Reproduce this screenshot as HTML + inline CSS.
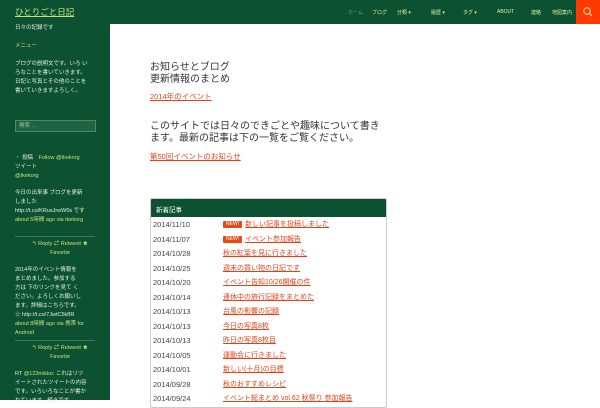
<!DOCTYPE html>
<html><head><meta charset="utf-8"><style>
*{margin:0;padding:0;box-sizing:border-box}
body{width:600px;height:400px;overflow:hidden;background:#fff;font-family:"Liberation Sans","Noto Sans CJK JP",sans-serif;position:relative}
.hdr{position:absolute;left:0;top:0;width:600px;height:24px;background:#0b5132}
.title{position:absolute;left:15px;top:6px;font-size:8.5px;color:#c6e27a;text-decoration:underline;white-space:nowrap}
.nav{position:absolute;top:9px;font-size:5px;color:#dff0a0;white-space:nowrap}
.srch{position:absolute;left:576px;top:0;width:24px;height:24px;background:#ff3a00}
.side{position:absolute;left:0;top:24px;width:110px;height:376px;background:#0b5132;color:#e6eedd;font-size:5.5px;line-height:9px}
.side div{white-space:nowrap}
.side .a{color:#c6e27a}
.main{position:absolute;left:110px;top:24px;right:0;bottom:0;background:#fff}
.h{position:absolute;left:150px;font-size:10px;color:#333;line-height:12px;white-space:nowrap}
.lk{position:absolute;left:150px;font-size:7.5px;color:#e2421a;text-decoration:underline;white-space:nowrap}
.tbl{position:absolute;left:150px;top:198px;width:237px;height:210px;border:1px solid #ccc;border-radius:2px;overflow:hidden}
.th{height:18px;background:#0b5132;color:#fff;font-size:6.5px;padding:5px 5px}
.row{height:14.5px;font-size:7.5px;color:#444;position:relative;line-height:14px;padding-left:2px;white-space:nowrap}
.row span{position:absolute;left:72px;color:#e2421a;text-decoration:underline;font-size:7px}
.new{display:inline-block;background:#e64a19;color:#fff;font-size:5px;line-height:7px;padding:0 3px;border-radius:1px;margin-right:3px;text-decoration:none;vertical-align:1px;font-weight:normal}
</style></head><body>
<div class="hdr"></div>
<div class="title">ひとりごと日記</div>
<div class="nav" style="left:348px;color:#3bb8a0">ホーム</div>
<div class="nav" style="left:372px">ブログ</div>
<div class="nav" style="left:397px">分類 ▾</div>
<div class="nav" style="left:431px">履歴 ▾</div>
<div class="nav" style="left:463px">タグ ▾</div>
<div class="nav" style="left:497px">ABOUT</div>
<div class="nav" style="left:531px">連絡</div>
<div class="nav" style="left:552px">地図案内</div>
<div class="srch"><svg width="24" height="24"><circle cx="11" cy="11" r="3.2" fill="none" stroke="#ffd0a0" stroke-width="1.2"/><line x1="13.3" y1="13.3" x2="16" y2="16" stroke="#ffd0a0" stroke-width="1.3"/></svg></div>
<div class="side">
<div style="position:absolute;left:15px;top:0px">日々の記録です</div>
<div class="a" style="position:absolute;left:15px;top:18px">メニュー</div>
<div style="position:absolute;left:15px;top:36px">ブログの説明文です。いろ い<br>ろなことを書いていきます。<br>日記と写真とその他のことを<br>書いていきますよろしく。</div>
<div style="position:absolute;left:15px;top:96px;width:81px;height:12px;border:1px solid #4f8a63;background:#1f6342;color:#9bc0a8;font-size:5.5px;padding:1px 3px;line-height:9px">検索 …</div>
<div style="position:absolute;left:15px;top:130px">・ 投稿　<span class="a">Follow @tkekorg</span><br>ツイート<br><span class="a">@tkekorg</span></div>
<div style="position:absolute;left:15px;top:165px">今日の出来事 ブログを更新<br>しました<br>http://t.co/KRusJrwW0s です<br><span class="a">about 5時間 ago via tkekorg</span></div>
<div style="position:absolute;left:15px;top:212px;width:80px;border-top:1px solid #3d7a55"></div>
<div class="a" style="position:absolute;left:20px;top:216px;width:80px;text-align:center">↰ Reply ⇄ Retweet ★<br>Favorite</div>
<div style="position:absolute;left:15px;top:242px">2014年のイベント情報を<br>まとめました。参加する<br>方は 下のリンクを見て く<br>ださい。よろしくお願いし<br>ます。詳細はこちらです。<br>☆ http://t.co/7JwtC5kfIR<br><span class="a">about 8時間 ago via 携帯 for</span><br><span class="a">Android</span></div>
<div style="position:absolute;left:15px;top:316px;width:80px;border-top:1px solid #3d7a55"></div>
<div class="a" style="position:absolute;left:20px;top:320px;width:80px;text-align:center">↰ Reply ⇄ Retweet ★<br>Favorite</div>
<div style="position:absolute;left:15px;top:346px">RT <span class="a">@123mikko:</span> これはリツ<br>イートされたツイートの内容<br>です。いろいろなことが書か<br>れています。続きです。</div>
</div>
<div class="main"></div>
<div class="h" style="top:62px">お知らせとブログ<br>更新情報のまとめ</div>
<div class="lk" style="top:91px">2014年のイベント</div>
<div class="h" style="top:121px">このサイトでは日々のできごとや趣味について書き<br>ます。最新の記事は下の一覧をご覧ください。</div>
<div class="lk" style="top:151px">第50回イベントのお知らせ</div>
<div class="tbl">
<div class="th">新着記事</div>
<div style="height:1px"></div>
<div class="row">2014/11/10<span><b class="new">NEW!</b>新しい記事を投稿しました</span></div>
<div class="row">2014/11/07<span><b class="new">NEW!</b>イベント参加報告</span></div>
<div class="row">2014/10/28<span>秋の紅葉を見に行きました</span></div>
<div class="row">2014/10/25<span>週末の買い物の日記です</span></div>
<div class="row">2014/10/20<span>イベント告知10/26開催の件</span></div>
<div class="row">2014/10/14<span>連休中の旅行記録をまとめた</span></div>
<div class="row">2014/10/13<span>台風の影響の記録</span></div>
<div class="row">2014/10/13<span>今日の写真8枚</span></div>
<div class="row">2014/10/13<span>昨日の写真8枚目</span></div>
<div class="row">2014/10/05<span>運動会に行きました</span></div>
<div class="row">2014/10/01<span>新しい(十月)の目標</span></div>
<div class="row">2014/09/28<span>秋のおすすめレシピ</span></div>
<div class="row">2014/09/24<span>イベント総まとめ vol.62 秋祭り 参加報告</span></div>
</div>
</body></html>
